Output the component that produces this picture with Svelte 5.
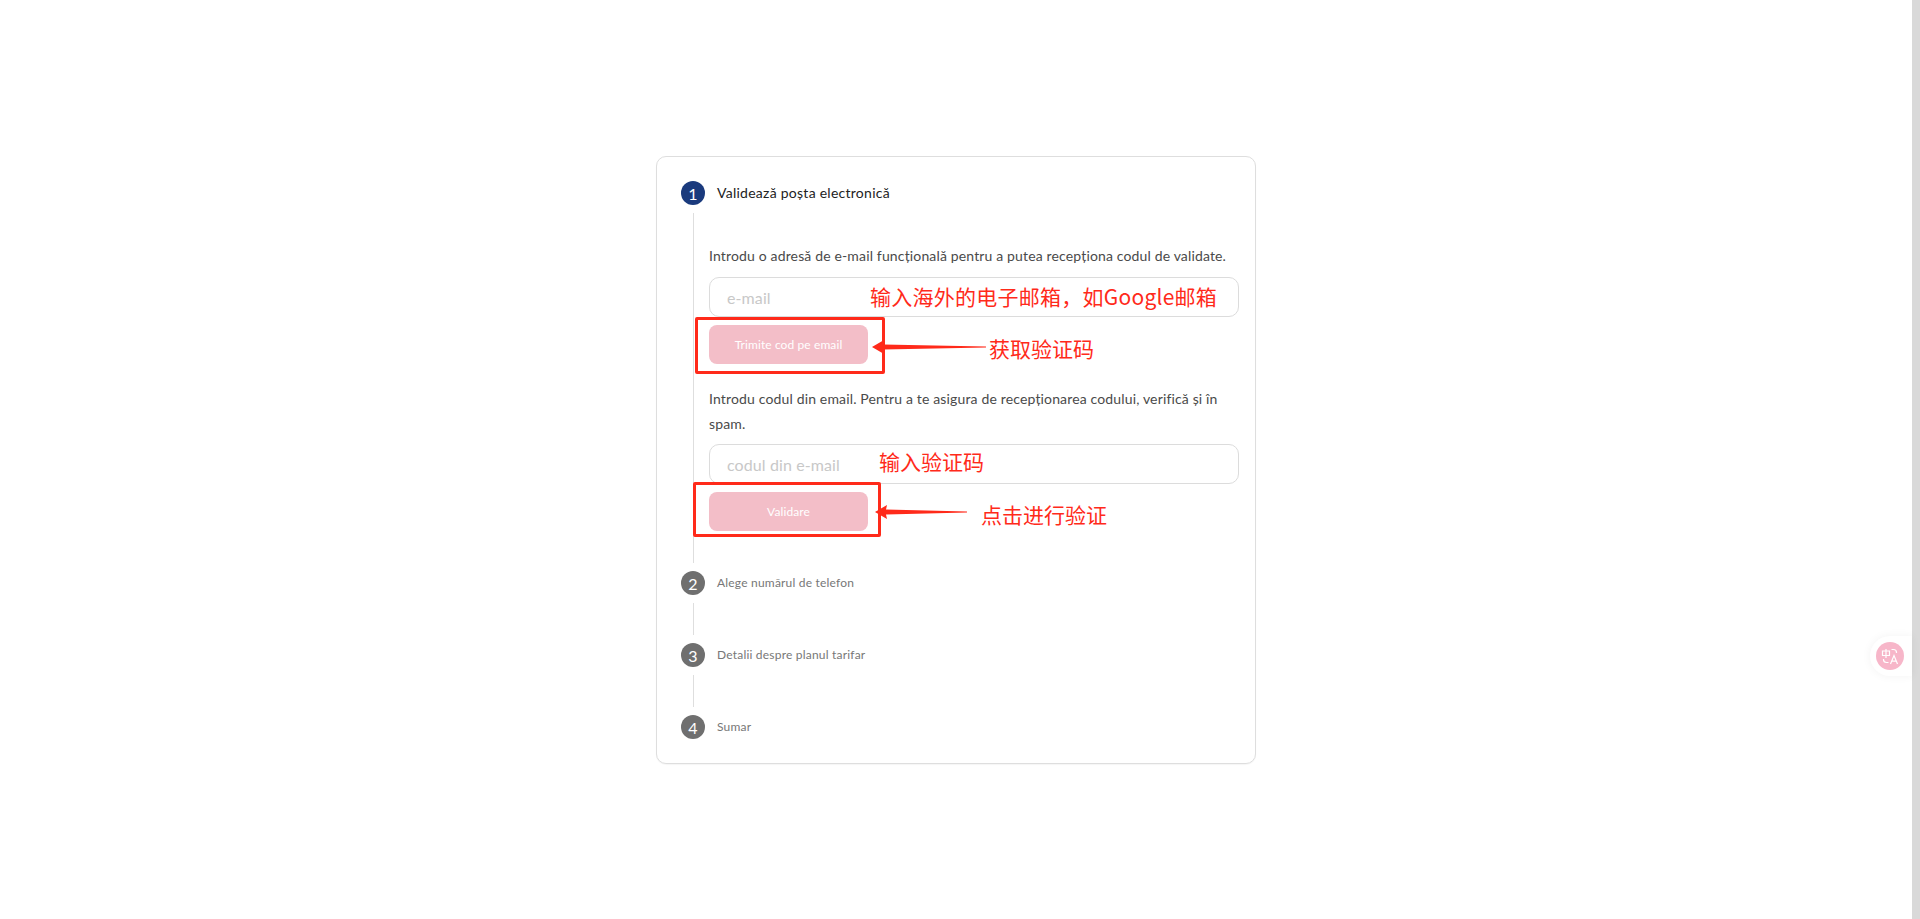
<script>
  const hint1 = 'Introdu o adresă de e-mail funcțională pentru a putea recepționa codul de validate.';
  const hint2 = 'Introdu codul din email. Pentru a te asigura de recepționarea codului, verifică și în spam.';
  const steps = [
    [2, 'Alege numărul de telefon'],
    [3, 'Detalii despre planul tarifar'],
    [4, 'Sumar']
  ];
</script>

<div class="page">
  <main class="main">
    <section class="card">
      <div class="head">
        <span class="num active">1</span>
        <span class="title">Validează poșta electronică</span>
      </div>
      <div class="line body">
        <p class="hint">{hint1}</p>
        <input class="field" placeholder="e-mail" />
        <button class="btn">Trimite cod pe email</button>
        <p class="hint second">{hint2}</p>
        <input class="field" placeholder="codul din e-mail" />
        <button class="btn">Validare</button>
      </div>
      {#each steps as [n, label], i (n)}
        <div class="head">
          <span class="num">{n}</span>
          <span class="label">{label}</span>
        </div>
        {#if i < steps.length - 1}<div class="line gap"></div>{/if}
      {/each}
    </section>
  </main>
  <div class="scrollbar"></div>

  <!-- red annotations drawn over the screenshot -->
  <div class="box b1"></div>
  <div class="box b2"></div>
  <svg class="arrow a1" width="114" height="18" viewBox="0 0 114 18"><path d="M0 9 L12 2 L11 6.5 L114 8.5 L114 9.5 L11 11.5 L12 16 Z" fill="#ff2a1a" /></svg>
  <svg class="arrow a2" width="92" height="18" viewBox="0 0 92 18"><path d="M0 9 L12 2 L11 6.5 L92 8.5 L92 9.5 L11 11.5 L12 16 Z" fill="#ff2a1a" /></svg>
  <span class="note n1">输入海外的电子邮箱，如Google邮箱</span>
  <span class="note n2">获取验证码</span>
  <span class="note n3">输入验证码</span>
  <span class="note n4">点击进行验证</span>

  <div class="translate">
    <span class="tr-dot">
      <svg width="20" height="20" viewBox="0 0 20 20" fill="none" stroke="#fff" stroke-width="1.2">
        <path d="M2.5 5h7v4.5h-7zM6 3v9" />
        <path d="M11.5 3.5h2a3 3 0 0 1 3 3v0.5" />
        <path d="M3.5 13v0.5a3 3 0 0 0 3 3h2" />
        <path d="M10.5 18l3.5-8.5 3.5 8.5M11.8 15.2h4.4" />
      </svg>
    </span>
  </div>
</div>

<style>
  :global(body) { margin: 0; background: #fff; font-family: Lato, "Noto Sans", sans-serif; }
  .page { position: relative; display: flex; height: 919px; overflow: hidden; }
  .main { flex: 1 1 auto; display: flex; justify-content: center; align-items: flex-start; padding-top: 156px; }
  .scrollbar { flex: 0 0 8px; background: #d9d9d9; }
  .card { box-sizing: border-box; width: 600px; padding: 24px 16px 24px 24px; background: #fff; border: 1px solid #dedede; border-radius: 10px; box-shadow: 0 1px 1px rgba(0, 0, 0, 0.04); }
  .head { display: flex; align-items: center; gap: 12px; height: 24px; }
  .num { flex: 0 0 24px; height: 24px; border-radius: 50%; display: flex; align-items: center; justify-content: center; background: #6f6f6f; color: #fff; font-size: 16px; }
  .num.active { background: #1a3a7d; }
  .title { position: relative; top: -1px; font-size: 14px; letter-spacing: 0.26px; color: #222; }
  .label { position: relative; top: -1px; font-size: 12px; letter-spacing: 0.2px; color: #777; }
  .line { margin: 8px 0 8px 12px; border-left: 1px solid #dedede; }
  .gap { height: 32px; }
  .body { display: flex; flex-direction: column; padding: 31px 0 32px 15px; }
  .hint { margin: 0 0 8.5px; font-size: 14px; line-height: 24.5px; letter-spacing: 0.15px; color: #4a4a4a; }
  .second { margin-top: 23px; margin-bottom: 8px; }
  .field { box-sizing: border-box; width: 100%; height: 40px; padding: 0 17px; border: 1px solid #dcdcdc; border-radius: 10px; background: #fff; font: 16px Lato, sans-serif; letter-spacing: 0.1px; outline: none; }
  .field::placeholder { color: #c8c8c8; opacity: 1; }
  .btn { width: 159px; height: 39px; margin-top: 8px; border: none; border-radius: 8px; background: #f3bec8; color: #fff; font: 12px Lato, sans-serif; letter-spacing: 0.1px; }
  .box { position: absolute; box-sizing: border-box; border: 3px solid #ff2a1a; border-radius: 2px; }
  .b1 { left: 695px; top: 317px; width: 190px; height: 57px; }
  .b2 { left: 693px; top: 482px; width: 188px; height: 55px; }
  .arrow { position: absolute; }
  .a1 { left: 872px; top: 338px; }
  .a2 { left: 875px; top: 503px; }
  .note { position: absolute; color: #ff2a1a; font-family: "Noto Sans CJK SC", sans-serif; font-size: 21px; line-height: 30px; white-space: nowrap; }
  .n1 { left: 870px; top: 281px; letter-spacing: 0.25px; }
  .n2 { left: 989px; top: 333px; }
  .n3 { left: 879px; top: 446px; }
  .n4 { left: 981px; top: 499px; }
  .translate { position: absolute; left: 1870px; top: 636px; width: 42px; height: 40px; display: flex; align-items: center; padding-left: 6px; box-sizing: border-box; background: #fff; border-radius: 20px 0 0 20px; box-shadow: 0 0 10px rgba(0, 0, 0, 0.05); }
  .tr-dot { width: 28px; height: 28px; border-radius: 50%; background: #f7b6c9; display: flex; align-items: center; justify-content: center; }
</style>
